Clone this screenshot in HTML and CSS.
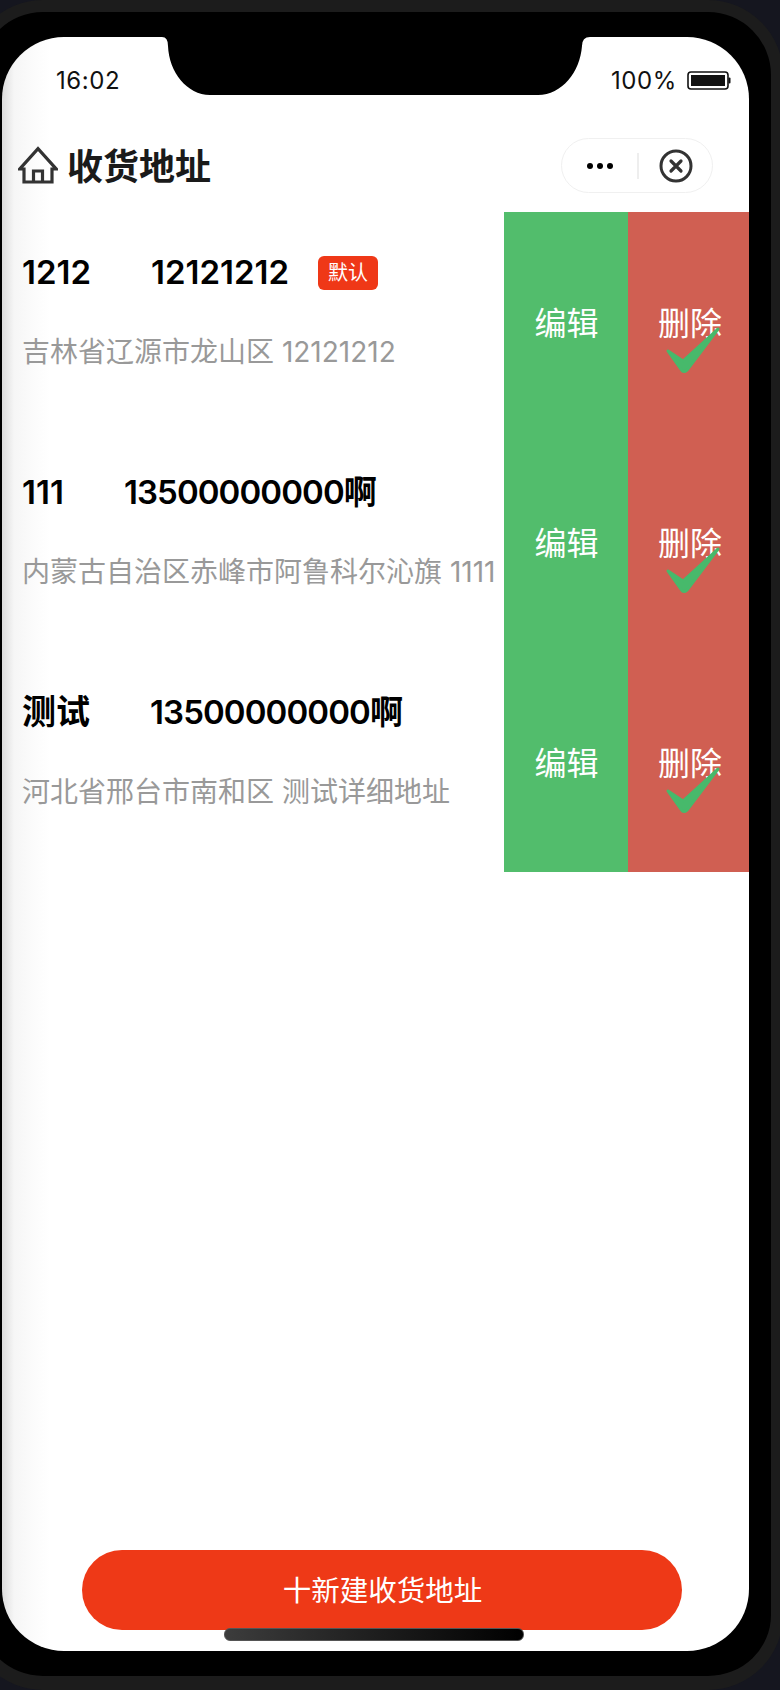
FILE: index.html
```html
<!DOCTYPE html>
<html lang="zh-CN">
<head>
<meta charset="utf-8">
<title>收货地址</title>
<link rel="stylesheet" href="styles.css">
</head>
<body>
<div class="device">
  <div class="screen">
    <svg class="notch" width="430" height="60" viewBox="0 0 430 60"><path d="M0 0 Q6 0 6 9 C7 35 25 58 48 58 H376 C400 58 418 35 420 9 Q420 0 428 0 Z"/></svg>
    <div class="status">
      <span class="time">16:02</span>
      <div class="status-right">
        <span class="percent">100%</span>
        <svg class="battery" width="44" height="19" viewBox="0 0 44 19"><rect x="1" y="1" width="40" height="17" rx="3" fill="none" stroke="#111" stroke-width="1.6"/><rect x="4" y="4" width="34" height="11" fill="#111"/><rect x="41.5" y="6.5" width="2" height="6" rx="1" fill="#111"/></svg>
      </div>
    </div>
    <header class="nav">
      <svg class="home" width="40" height="40" viewBox="0 0 40 40" fill="none" stroke="#333" stroke-width="3.2" stroke-linejoin="miter"><path d="M6 23 H1.8 L20 2.6 L38.2 23 H34 V36 H6 Z"/><path d="M15.5 36 V25 H24.5 V36"/></svg>
      <h1 class="title">收货地址</h1>
      <div class="capsule">
        <div class="dots"><i></i><i></i><i></i></div>
        <span class="divider"></span>
        <svg class="close" width="34" height="34" viewBox="0 0 34 34" fill="none" stroke="#333"><circle cx="17" cy="17" r="15" stroke-width="3"/><path d="M12 12 L22 22 M22 12 L12 22" stroke-width="3.2" stroke-linecap="round"/></svg>
      </div>
    </header>
    <main class="list">
      <section class="row">
        <div class="info">
          <div class="contact"><span>1212</span><span>12121212</span><em class="badge">默认</em></div>
          <p class="address">吉林省辽源市龙山区 12121212</p>
        </div>
        <div class="actions">
          <button class="edit">编辑</button>
          <button class="del">删除<svg class="check" width="60" height="50" viewBox="0 0 60 50"><path d="M6 25 L21 35 L56 3 L25 44 Q21.5 47 19.5 44 Z"/></svg></button>
        </div>
      </section>
      <section class="row">
        <div class="info">
          <div class="contact"><span>111</span><span class="phone">13500000000啊</span></div>
          <p class="address">内蒙古自治区赤峰市阿鲁科尔沁旗 1111</p>
        </div>
        <div class="actions">
          <button class="edit">编辑</button>
          <button class="del">删除<svg class="check" width="60" height="50" viewBox="0 0 60 50"><path d="M6 25 L21 35 L56 3 L25 44 Q21.5 47 19.5 44 Z"/></svg></button>
        </div>
      </section>
      <section class="row">
        <div class="info">
          <div class="contact"><span class="name-cjk">测试</span><span class="phone">13500000000啊</span></div>
          <p class="address">河北省邢台市南和区 测试详细地址</p>
        </div>
        <div class="actions">
          <button class="edit">编辑</button>
          <button class="del">删除<svg class="check" width="60" height="50" viewBox="0 0 60 50"><path d="M6 25 L21 35 L56 3 L25 44 Q21.5 47 19.5 44 Z"/></svg></button>
        </div>
      </section>
    </main>
    <footer class="footer">
      <button class="add">十新建收货地址</button>
    </footer>
    <div class="indicator"></div>
  </div>
</div>
</body>
</html>
```
FILE: styles.css
```css
html, body {
  margin: 0;
  height: 1690px;
  overflow: hidden;
  background: #15161f;
}
body {
  font-family: Inter, "Noto Sans CJK SC", sans-serif;
}
.device {
  box-sizing: border-box;
  width: 815px;
  height: 1690px;
  margin-left: -32px;
  padding: 25px 22px;
  border: solid #1c1c1c;
  border-width: 12px 12px 14px;
  border-radius: 75px;
  background: #000;
}
.screen {
  position: relative;
  display: flex;
  flex-direction: column;
  height: 1614px;
  overflow: hidden;
  border-radius: 62px;
  background: linear-gradient(90deg, #dcdcdc 0, #f6f6f6 12px, #fbfbfb 30px, #fff 48px);
}
.notch {
  position: absolute;
  top: 0;
  left: 160px;
  fill: #000;
}
.status {
  display: flex;
  flex: none;
  justify-content: space-between;
  align-items: center;
  box-sizing: border-box;
  height: 82px;
  padding: 4px 18px 0 54px;
  color: #111;
  font-size: 24px;
  letter-spacing: 0.6px;
}
.status-right {
  display: flex;
  align-items: center;
  gap: 10px;
}
.battery {
  display: block;
}
.nav {
  display: flex;
  flex: none;
  align-items: center;
  box-sizing: border-box;
  height: 93px;
  padding: 0 36px 0 16px;
}
.home {
  flex: none;
}
.title {
  margin: 0 0 4px 9px;
  color: #1a1a1a;
  font-family: "Noto Sans CJK SC", sans-serif;
  font-size: 36px;
  font-weight: 700;
}
.capsule {
  display: flex;
  align-items: center;
  box-sizing: border-box;
  width: 152px;
  height: 55px;
  margin-left: auto;
  padding-left: 25px;
  border: 1.5px solid #f0f0f0;
  border-radius: 28px;
  background: #fff;
}
.dots {
  display: flex;
  gap: 4px;
}
.dots i {
  width: 6px;
  height: 6px;
  border-radius: 50%;
  background: #000;
}
.divider {
  width: 1.5px;
  height: 26px;
  margin: 0 20px 0 24px;
  background: #eee;
}
.close {
  flex: none;
}
.list {
  flex: none;
}
.row {
  display: flex;
  height: 220px;
}
.info {
  box-sizing: border-box;
  flex: 1;
  min-width: 0;
  padding: 40px 0 0 20px;
}
.contact {
  display: flex;
  align-items: center;
  gap: 60px;
  height: 40px;
  color: #000;
  font-size: 33px;
  font-weight: 600;
  line-height: 40px;
}
.phone {
  letter-spacing: -0.9px;
}
.name-cjk {
  font-size: 34px;
}
.contact .badge {
  width: 60px;
  height: 34px;
  margin: 2px 0 0 -31px;
  border-radius: 6px;
  background: #ef3817;
  color: #fff;
  font-size: 20px;
  font-style: normal;
  font-weight: 400;
  line-height: 34px;
  text-align: center;
}
.address {
  margin: 40px 0 0;
  color: #999;
  font-size: 28px;
  line-height: 40px;
  white-space: nowrap;
}
.actions {
  display: flex;
  flex: none;
  width: 245px;
}
.actions button {
  position: relative;
  padding: 0 0 3px 1px;
  border: 0;
  color: #fff;
  font-family: "Noto Sans CJK SC", sans-serif;
  font-size: 32px;
}
.edit {
  width: 124px;
  background: #52bd6c;
}
.actions .del {
  width: 121px;
  padding-left: 3px;
  background: #d05f52;
}
.check {
  position: absolute;
  top: 114px;
  left: 34px;
  fill: #47b96b;
  stroke: #47b96b;
  stroke-width: 3;
  stroke-linejoin: round;
}
.footer {
  display: flex;
  flex: none;
  margin-top: auto;
  padding: 0 0 21px 80px;
}
.add {
  width: 600px;
  height: 80px;
  padding: 0 0 4px 1px;
  border: 0;
  border-radius: 40px;
  background: #ee3917;
  color: #fff;
  font-family: "Noto Sans CJK SC", sans-serif;
  font-size: 28.5px;
}
.indicator {
  position: absolute;
  bottom: 10px;
  left: 222px;
  box-sizing: border-box;
  width: 300px;
  height: 13px;
  border: 1px solid #555;
  border-radius: 6px;
  background: linear-gradient(90deg, #3c3c3c, #000);
}
```
